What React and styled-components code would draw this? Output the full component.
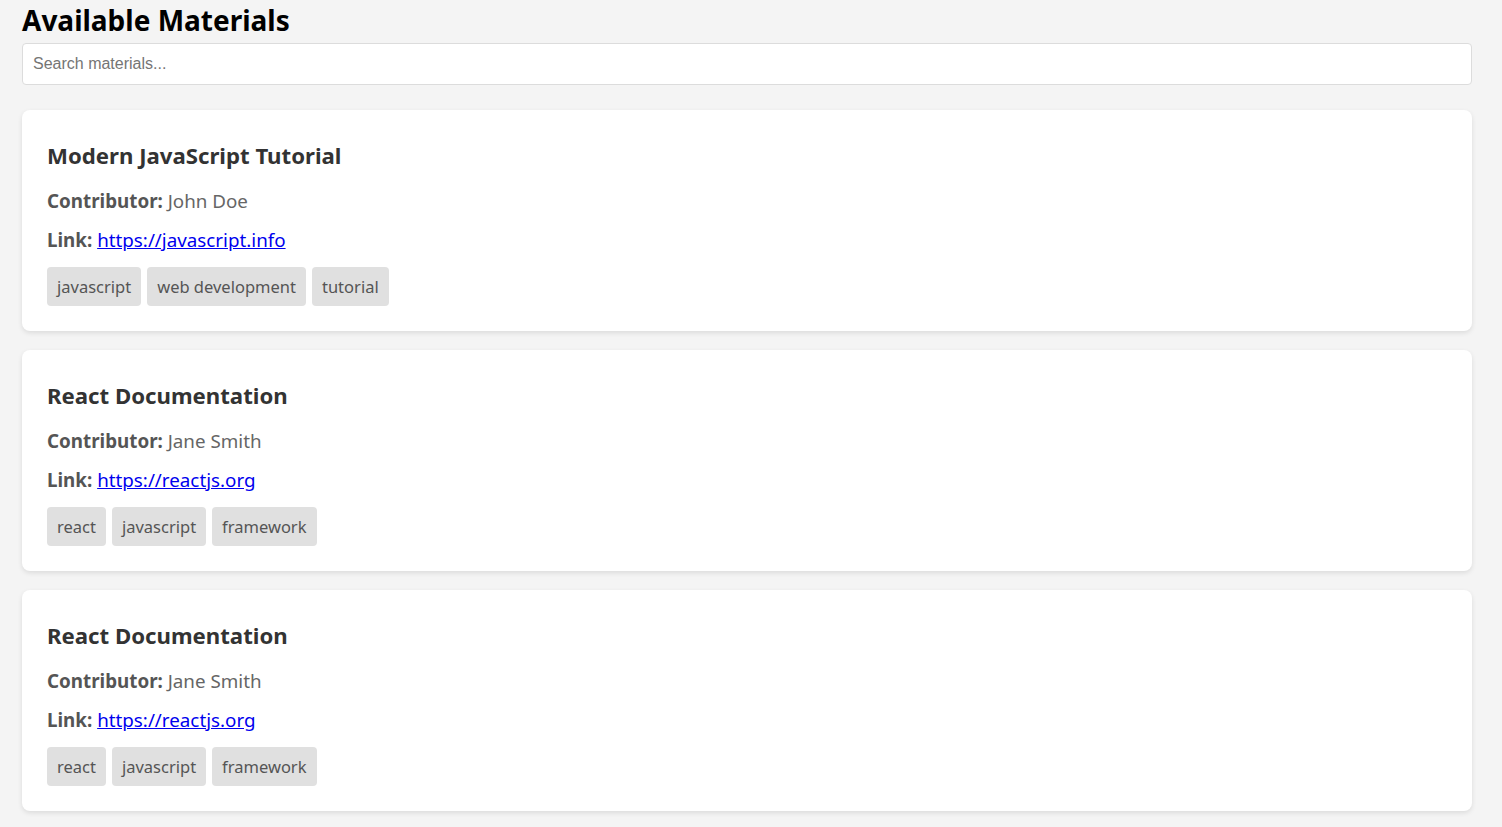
import React, { useState } from 'react'
import styled, { createGlobalStyle } from 'styled-components'

const GlobalStyle = createGlobalStyle`
  html, body {
    margin: 0;
    padding: 0;
    background: #f4f4f4;
  }
  body {
    font-family: 'Noto Sans', 'Open Sans', sans-serif;
  }
`

const Page = styled.div`
  padding: 0 30px 16px 22px;
`

const Heading = styled.h1`
  margin: 0 0 3px;
  font-size: 28px;
  line-height: 40px;
  font-weight: 700;
  color: #000;
`

const Search = styled.input`
  display: block;
  box-sizing: border-box;
  width: 100%;
  height: 42px;
  padding: 0 10px;
  border: 1px solid #dcdcdc;
  border-radius: 4px;
  background: #fff;
  font-family: 'Liberation Sans', Arial, sans-serif;
  font-size: 16px;
  color: #333;
  outline: none;

  &::placeholder {
    color: #757575;
  }
`

const List = styled.div`
  display: flex;
  flex-direction: column;
  gap: 19px;
  margin-top: 25px;
`

const Card = styled.div`
  background: #fff;
  border-radius: 8px;
  box-shadow: 0 2px 5px rgba(0, 0, 0, 0.1);
  padding: 25px;
`

const Title = styled.h3`
  margin: 6px 0 17px;
  font-size: 22.2px;
  line-height: 30px;
  font-weight: 700;
  color: #333;
`

const Field = styled.p`
  margin: 0 0 12px;
  font-size: 18.8px;
  line-height: 27px;
  color: #666;

  & + & {
    margin-bottom: 13px;
  }
`

const Label = styled.strong`
  color: #555;
  font-weight: 700;
`

const Link = styled.a`
  color: #0000ee;
  text-decoration: underline;
`

const Tags = styled.div`
  display: flex;
  flex-wrap: wrap;
  gap: 6px;
`

const Tag = styled.span`
  background: #e0e0e0;
  color: #555;
  border-radius: 4px;
  padding: 6px 10px;
  font-size: 16.5px;
  line-height: 27px;
`

const materials = [
  {
    id: 1,
    title: 'Modern JavaScript Tutorial',
    contributor: 'John Doe',
    link: 'https://javascript.info',
    tags: ['javascript', 'web development', 'tutorial'],
  },
  {
    id: 2,
    title: 'React Documentation',
    contributor: 'Jane Smith',
    link: 'https://reactjs.org',
    tags: ['react', 'javascript', 'framework'],
  },
  {
    id: 3,
    title: 'React Documentation',
    contributor: 'Jane Smith',
    link: 'https://reactjs.org',
    tags: ['react', 'javascript', 'framework'],
  },
]

function MaterialCard({ material }) {
  return (
    <Card>
      <Title>{material.title}</Title>
      <Field>
        <Label>Contributor:</Label> {material.contributor}
      </Field>
      <Field>
        <Label>Link:</Label> <Link href={material.link}>{material.link}</Link>
      </Field>
      <Tags>
        {material.tags.map(tag => (
          <Tag key={tag}>{tag}</Tag>
        ))}
      </Tags>
    </Card>
  )
}

export default function App() {
  const [query, setQuery] = useState('')

  return (
    <Page>
      <GlobalStyle />
      <Heading>Available Materials</Heading>
      <Search onChange={e => setQuery(e.target.value)} placeholder="Search materials..." value={query} />
      <List>
        {materials.map(material => (
          <MaterialCard key={material.id} material={material} />
        ))}
      </List>
    </Page>
  )
}
